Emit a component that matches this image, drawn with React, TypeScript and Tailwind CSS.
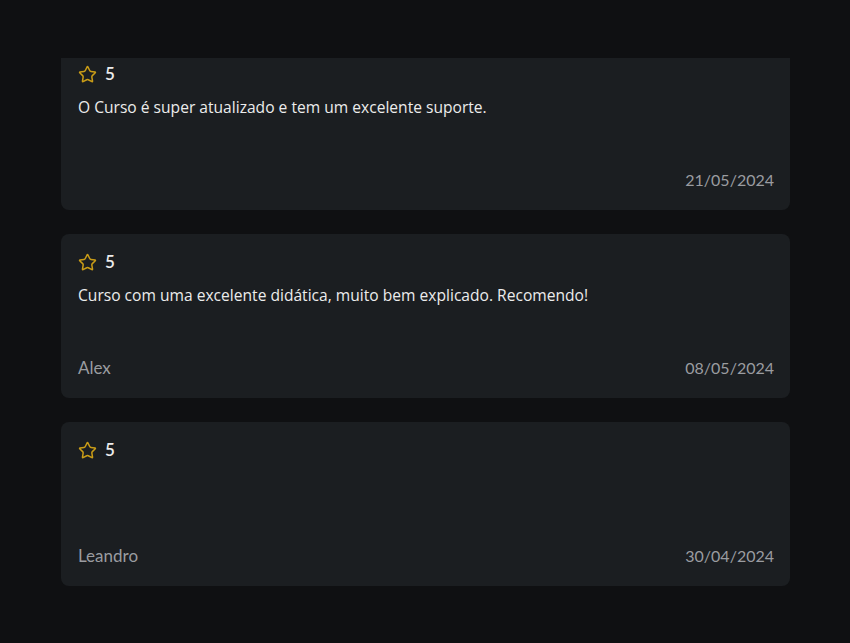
import { Star } from "lucide-react";

type Review = {
  rating: number;
  text: string;
  author: string;
  date: string;
};

const reviews: Review[] = [
  { rating: 5, text: "O Curso é super atualizado e tem um excelente suporte.", author: "", date: "21/05/2024" },
  { rating: 5, text: "Curso com uma excelente didática, muito bem explicado. Recomendo!", author: "Alex", date: "08/05/2024" },
  { rating: 5, text: "", author: "Leandro", date: "30/04/2024" },
];

const ReviewCard = ({ review }: { review: Review }) => {
  return (
    <div className="h-[164px] rounded-lg bg-[#1b1e21] pl-[17px] pr-4 pt-4 pb-[18px] flex flex-col">
      <div className="flex flex-row items-center gap-2 h-6">
        <Star className="size-[19px] text-[#c99c17]" strokeWidth={1.9} />
        <span className="text-[17px] font-semibold text-[#ececec]">{review.rating}</span>
      </div>
      <p className="mt-[10px] text-[15.6px] leading-[22px] font-medium text-[#ececec] font-['Open_Sans',sans-serif]">
        {review.text}
      </p>
      <div className="mt-auto flex flex-row justify-between items-center h-6 text-base text-[#9a9ca0]">
        <span className="text-[17px]">{review.author}</span>
        <span>{review.date}</span>
      </div>
    </div>
  );
};

export default function App() {
  return (
    <div className="w-full h-[643px] bg-[#0f1012] pt-[58px] font-['Lato','Noto_Sans',sans-serif]">
      <div className="h-[585px] overflow-hidden pl-[61px] pr-[60px]">
        <div className="-mt-3 flex flex-col gap-6">
          {reviews.map((r, i) => (
            <ReviewCard key={i} review={r} />
          ))}
        </div>
      </div>
    </div>
  );
}
